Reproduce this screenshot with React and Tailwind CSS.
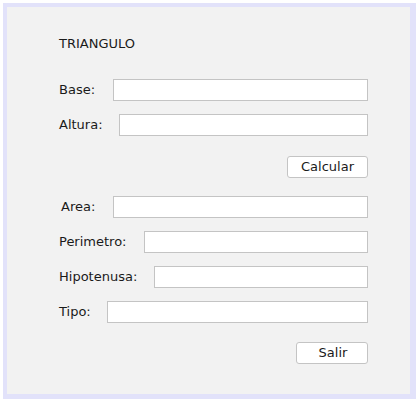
import React from 'react';

const results = [
  { label: 'Area:', width: 'w-[54px] pl-[2px]' },
  { label: 'Perimetro:', width: 'w-[85px]' },
  { label: 'Hipotenusa:', width: 'w-[95px]' },
  { label: 'Tipo:', width: 'w-[48px]' },
];

function Field({ label, width, className = '' }) {
  return (
    <div className={`flex items-center h-[22px] ${className}`}>
      <span className={`shrink-0 whitespace-nowrap ${width}`}>{label}</span>
      <input
        type="text"
        className="flex-1 min-w-0 h-[22px] bg-white border border-[#c4c4c4] outline-none px-1"
      />
    </div>
  );
}

function App() {
  return (
    <div
      className="w-[416px] h-[402px] bg-white pt-[3px] pl-[3px] text-[13px] text-[#1a1a1a]"
      style={{ fontFamily: '"DejaVu Sans", sans-serif' }}
    >
      <div className="w-[413px] h-[396px] bg-[#e2e2fa] pt-[4px] pl-[4px] pr-[6px] pb-[5px]">
        <div className="h-full bg-[#f2f2f2] pl-[52px] pr-[42px] flex flex-col">
          <div className="mt-[29px] h-[16px] leading-[16px]">TRIANGULO</div>

          <Field label="Base:" width="w-[54px]" className="mt-[27px]" />
          <Field label="Altura:" width="w-[60px]" className="mt-[13px]" />

          <div className="mt-[20px] flex justify-end">
            <button className="w-[81px] h-[22px] bg-white border border-[#c4c4c4] rounded-[3px]">
              Calcular
            </button>
          </div>

          {results.map((f, i) => (
            <Field
              key={f.label}
              label={f.label}
              width={f.width}
              className={i === 0 ? 'mt-[18px]' : 'mt-[13px]'}
            />
          ))}

          <div className="mt-[19px] flex justify-end">
            <button className="w-[72px] h-[22px] bg-white border border-[#c4c4c4] rounded-[3px] pl-[2px]">
              Salir
            </button>
          </div>
        </div>
      </div>
    </div>
  );
}

export default App;
